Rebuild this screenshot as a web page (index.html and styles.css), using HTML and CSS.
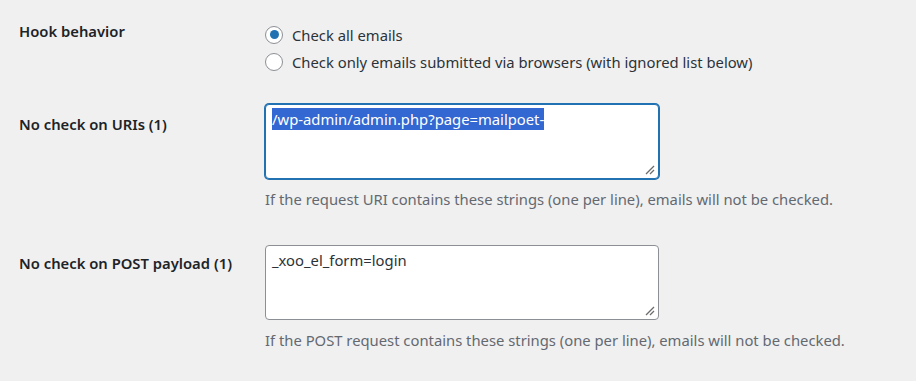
FILE: index.html
```html
<!DOCTYPE html>
<html lang="en">
  <head>
    <meta charset="UTF-8" />
    <meta name="viewport" content="width=device-width, initial-scale=1.0" />
    <title>Settings</title>
    <link rel="stylesheet" href="styles.css">
  </head>
  <body>
    <div class="form-table">
      <div class="row row-hook">
        <div class="th">Hook behavior</div>
        <div class="td">
          <label class="radio">
            <span class="dot checked"></span>
            <span>Check all emails</span>
          </label>
          <label class="radio">
            <span class="dot"></span>
            <span>Check only emails submitted via browsers (with ignored list below)</span>
          </label>
        </div>
      </div>

      <div class="row row-uris">
        <div class="th">No check on URIs (1)</div>
        <div class="td">
          <div class="textarea focused">
            <span class="selected">/wp-admin/admin.php?page=mailpoet-</span>
            <svg class="grip" viewBox="0 0 10 10" width="10" height="10">
              <line x1="1" y1="9" x2="9" y2="1" />
              <line x1="5" y1="9" x2="9" y2="5" />
            </svg>
          </div>
          <p class="description">If the request URI contains these strings (one per line), emails will not be checked.</p>
        </div>
      </div>

      <div class="row row-post">
        <div class="th">No check on POST payload (1)</div>
        <div class="td">
          <div class="textarea">
            <span>_xoo_el_form=login</span>
            <svg class="grip" viewBox="0 0 10 10" width="10" height="10">
              <line x1="1" y1="9" x2="9" y2="1" />
              <line x1="5" y1="9" x2="9" y2="5" />
            </svg>
          </div>
          <p class="description">If the POST request contains these strings (one per line), emails will not be checked.</p>
        </div>
      </div>
    </div>
  </body>
</html>
```

FILE: styles.css
```css
body {
  margin: 0;
  background: #f0f0f1;
  color: #1d2327;
  font-family: 'Noto Sans', 'Open Sans', sans-serif;
  font-size: 14.8px;
}
.form-table {
  width: 916px;
}
.row {
  display: grid;
  grid-template-columns: 265px 1fr;
}
.th {
  padding-left: 19px;
  font-weight: 600;
  line-height: 18px;
}
.row-hook .th {
  padding-top: 22px;
}
.row-hook .td {
  padding-top: 21px;
}
.row-uris .th {
  padding-top: 40px;
}
.row-uris .td {
  padding-top: 29px;
}
.row-post .th {
  padding-top: 45px;
}
.row-post .td {
  padding-top: 36px;
}
.radio {
  display: flex;
  align-items: center;
  gap: 9px;
  height: 27px;
  color: #2c3338;
}
.dot {
  box-sizing: border-box;
  width: 18px;
  height: 18px;
  border: 1px solid #8c8f94;
  border-radius: 50%;
  background: #fff;
  display: flex;
  align-items: center;
  justify-content: center;
}
.dot.checked::before {
  content: '';
  width: 9px;
  height: 9px;
  border-radius: 50%;
  background: #2271b1;
}
.textarea {
  position: relative;
  box-sizing: border-box;
  width: 394px;
  height: 75px;
  padding: 4px 6px;
  background: #fff;
  border: 1px solid #8c8f94;
  border-radius: 4px;
  line-height: 20px;
  color: #2c3338;
}
.textarea.focused {
  border-color: #2271b1;
  box-shadow: 0 0 0 1px #2271b1;
}
.selected {
  background: #3367d1;
  color: #fff;
  padding: 1px 0;
}
.grip {
  position: absolute;
  right: 3px;
  bottom: 3px;
  stroke: #6b6b6b;
  stroke-width: 1.2;
}
.description {
  margin: 10px 0 0;
  line-height: 20px;
  color: #646970;
}
```
